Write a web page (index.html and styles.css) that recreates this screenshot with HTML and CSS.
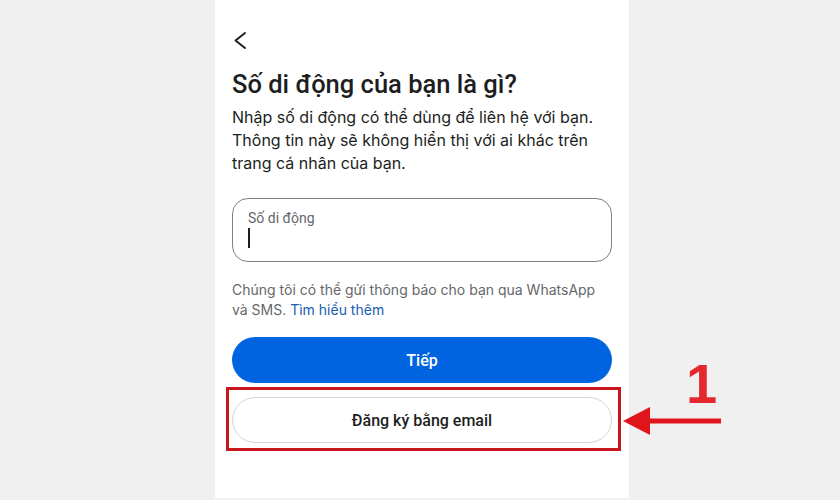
FILE: index.html
```html
<!DOCTYPE html>
<html lang="vi">
<head>
<meta charset="utf-8">
<title>Số di động</title>
<link rel="stylesheet" href="styles.css">
</head>
<body>
<div class="stage">
  <div class="phone">
    <div class="back">
      <svg width="24" height="24" viewBox="0 0 24 24" aria-hidden="true">
        <path d="M13 5 L3.5 12.5 L13 20" fill="none" stroke="#1c1e21" stroke-width="2" stroke-linecap="round" stroke-linejoin="round"/>
      </svg>
    </div>
    <h1 class="title">Số di động của bạn là gì?</h1>
    <p class="desc">Nhập số di động có thể dùng để liên hệ với bạn. Thông tin này sẽ không hiển thị với ai khác trên trang cá nhân của bạn.</p>
    <div class="field">
      <div class="field-label">Số di động</div>
      <div class="caret"></div>
    </div>
    <p class="hint">Chúng tôi có thể gửi thông báo cho bạn qua WhatsApp và SMS. <span class="link">Tìm hiểu thêm</span></p>
    <div class="btn btn-primary">Tiếp</div>
    <div class="btn btn-secondary">Đăng ký bằng email</div>
  </div>
  <div class="highlight"></div>
  <svg class="arrow" width="110" height="40" viewBox="0 0 110 40" aria-hidden="true">
    <polygon points="0,14 27,0 27,28" fill="#e0151c"/>
    <rect x="25" y="11.5" width="73" height="5" fill="#e0151c"/>
  </svg>
  <div class="step">1</div>
</div>
</body>
</html>
```
FILE: styles.css
```css
html, body {
  margin: 0;
  padding: 0;
}
body {
  background: #f0f0f0;
  font-family: Roboto, "Noto Sans", "Liberation Sans", sans-serif;
  color: #1c1e21;
}
.stage {
  position: relative;
  width: 840px;
  height: 500px;
  overflow: hidden;
}
.phone {
  box-sizing: border-box;
  width: 414px;
  height: 498px;
  margin-left: 215px;
  background: #ffffff;
  padding: 28px 17px 0;
  display: flex;
  flex-direction: column;
}
.back {
  height: 24px;
  display: flex;
}
.title {
  margin: 16px 0 0;
  font-size: 25.5px;
  line-height: 32px;
  font-weight: 500;
  letter-spacing: 0;
}
.desc {
  margin: 6px 0 0;
  font-family: Inter, Roboto, "Noto Sans", sans-serif;
  font-size: 16px;
  line-height: 23px;
  font-weight: 400;
}
.field {
  box-sizing: border-box;
  margin-top: 23px;
  height: 64px;
  border: 1px solid #7d8186;
  border-radius: 16px;
  padding: 10px 15px 0;
}
.field-label {
  font-size: 14px;
  line-height: 18px;
  color: #65676b;
}
.caret {
  margin-top: 1px;
  width: 2px;
  height: 20px;
  background: #1c1e21;
}
.hint {
  margin: 18px 0 0;
  font-family: Inter, Roboto, "Noto Sans", sans-serif;
  font-size: 14px;
  line-height: 20px;
  color: #65676b;
}
.link {
  color: #1a5cb0;
}
.btn {
  box-sizing: border-box;
  height: 46px;
  border-radius: 23px;
  display: flex;
  align-items: center;
  justify-content: center;
  font-size: 16px;
  font-weight: 500;
}
.btn-primary {
  margin-top: 17px;
  background: #0064e0;
  color: #ffffff;
}
.btn-secondary {
  margin-top: 14px;
  background: #ffffff;
  border: 1px solid #d3d5d9;
  color: #1c1e21;
}
.highlight {
  position: absolute;
  left: 226px;
  top: 387px;
  width: 395px;
  height: 64px;
  box-sizing: border-box;
  border: 3px solid #c8161d;
}
.arrow {
  position: absolute;
  left: 623px;
  top: 407px;
}
.step {
  position: absolute;
  left: 686px;
  top: 352px;
  font-family: "Liberation Sans", Arial, sans-serif;
  font-weight: 700;
  font-size: 56px;
  line-height: 64px;
  color: #e5282e;
}
```
